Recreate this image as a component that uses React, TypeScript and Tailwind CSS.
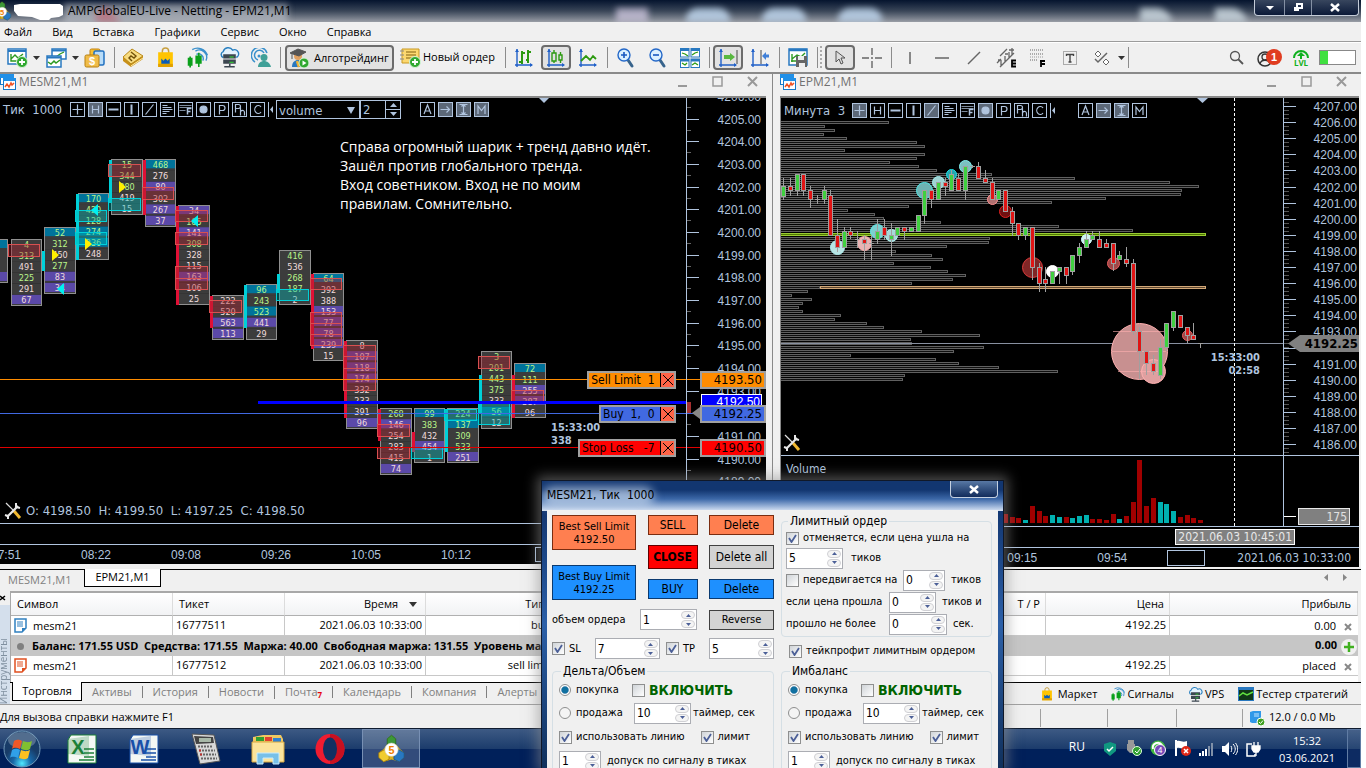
import React from "react";
import type { ReactNode } from "react";

type Cell = [string, string];
type Cluster = {
  x: number;
  y: number;
  w: number;
  h: number;
  rows: Cell[];
  bar?: [string, number, number];
  marks?: [string, number, number][];
};

const RED = "#e01035";
const CYAN = "#00d0d8";
const STEEL = "#b0c4de";

/* Cell codes: first letter is the fill (n, t, p), second the text tone (g, w). */
const clusters: Cluster[] = [
  { x: -24, y: 239, w: 32, h: 44, rows: [["173", "tg"], ["253", "ng"], ["282", "nw"], ["142", "pw"]] },
  { x: 11, y: 239, w: 31, h: 67, rows: [["4", "ng"], ["313", "ng"], ["491", "nw"], ["225", "ng"], ["291", "nw"], ["67", "pw"]], marks: [["r", 244, 256]] },
  { x: 44, y: 227, w: 32, h: 67, rows: [["52", "tg"], ["312", "ng"], ["450", "nw"], ["277", "ng"], ["83", "pw"], ["34", "pw"]], bar: [CYAN, 251, 271] },
  { x: 78, y: 193, w: 31, h: 67, rows: [["170", "tg"], ["420", "ng"], ["128", "ng"], ["274", "tg"], ["236", "tg"], ["248", "nw"]], bar: [CYAN, 194, 260], marks: [["c", 210, 221], ["c", 232, 244]] },
  { x: 111, y: 159, w: 32, h: 56, rows: [["15", "ng"], ["344", "ng"], ["380", "ng"], ["419", "nw"], ["15", "nw"]], bar: [CYAN, 160, 203], marks: [["r", 164, 176], ["c", 198, 210]] },
  { x: 145, y: 159, w: 31, h: 68, rows: [["468", "tg"], ["276", "nw"], ["80", "pw"], ["302", "nw"], ["267", "pw"], ["37", "pw"]], bar: [RED, 160, 215], marks: [["r", 187, 199]] },
  { x: 178, y: 205, w: 32, h: 100, rows: [["34", "pw"], ["185", "ng"], ["141", "pw"], ["308", "ng"], ["328", "nw"], ["115", "nw"], ["163", "pw"], ["106", "nw"], ["25", "nw"]], bar: [RED, 206, 305], marks: [["r", 210, 221], ["r", 232, 244], ["r", 266, 278], ["r", 278, 289]] },
  { x: 212, y: 295, w: 32, h: 45, rows: [["222", "nw"], ["520", "nw"], ["563", "pw"], ["113", "pw"]], bar: [RED, 296, 328], marks: [["r", 300, 312]] },
  { x: 246, y: 284, w: 31, h: 56, rows: [["96", "tg"], ["243", "ng"], ["523", "tg"], ["441", "pw"], ["29", "nw"]], bar: [CYAN, 285, 328] },
  { x: 279, y: 250, w: 32, h: 55, rows: [["416", "ng"], ["536", "nw"], ["268", "ng"], ["187", "ng"], ["2", "nw"]], bar: [CYAN, 274, 293], marks: [["c", 289, 300]] },
  { x: 313, y: 273, w: 31, h: 88, rows: [["64", "tg"], ["392", "nw"], ["388", "nw"], ["153", "pw"], ["77", "pw"], ["78", "pw"], ["239", "pw"], ["15", "nw"]], bar: [RED, 274, 349], marks: [["r", 278, 289], ["r", 312, 323], ["r", 323, 334], ["r", 334, 345]] },
  { x: 346, y: 340, w: 32, h: 89, rows: [["8", "nw"], ["107", "pw"], ["118", "pw"], ["174", "pw"], ["332", "nw"], ["233", "nw"], ["391", "nw"], ["96", "pw"]], bar: [RED, 341, 418], marks: [["r", 345, 356], ["r", 356, 368], ["r", 368, 379], ["r", 379, 390]] },
  { x: 380, y: 408, w: 32, h: 67, rows: [["268", "ng"], ["146", "pw"], ["254", "nw"], ["283", "nw"], ["415", "nw"], ["74", "pw"]], bar: [RED, 409, 441], marks: [["r", 424, 436], ["r", 447, 458]] },
  { x: 414, y: 408, w: 31, h: 55, rows: [["99", "tg"], ["383", "ng"], ["432", "nw"], ["454", "pw"], ["1", "nw"]], bar: [RED, 432, 452], marks: [["c", 447, 458]] },
  { x: 447, y: 408, w: 32, h: 55, rows: [["224", "ng"], ["137", "tg"], ["309", "ng"], ["533", "ng"], ["251", "pw"]], bar: [CYAN, 409, 452], marks: [["c", 409, 420]] },
  { x: 481, y: 351, w: 31, h: 78, rows: [["3", "ng"], ["201", "ng"], ["443", "ng"], ["375", "ng"], ["333", "nw"], ["56", "tg"], ["12", "nw"]], bar: [CYAN, 375, 413], marks: [["r", 356, 368], ["c", 402, 424]] },
  { x: 514, y: 363, w: 32, h: 55, rows: [["72", "tg"], ["111", "ng"], ["255", "pw"], ["387", "pw"], ["96", "nw"]], bar: [RED, 375, 418], marks: [["r", 390, 402]] },
];

const fills: Record<string, string> = { n: "#3c3c3c", t: "#00739b", p: "#5b49a8" };
const tones: Record<string, string> = { g: "#b9f58a", w: "#f0dcdc" };

const profile = [
  889, 825, 835, 824, 847, 917, 925, 845, 925, 917, 890, 919, 937, 992, 1075, 1170, 1199, 1182, 1181, 1106, 1052, 909, 848, 875, 884, 941, 1059,
  1133, 1206, 990, 989, 947, 896, 932, 943, 894, 931, 948, 966, 953, 912, 820, 808, 792, 812, 803, 799, 803, 841, 835, 867, 884, 922, 980, 911,
  912, 984, 954, 851, 936, 959, 999, 1058, 905, 903,
];

/* x, wick top, wick bottom, body top, body bottom, direction */
const candles: [number, number, number, number, number, string][] = [
  [783, 178, 200, 186, 196, "u"], [790, 178, 196, 186, 190, "d"], [797, 174, 196, 174, 190, "u"], [803, 174, 196, 174, 190, "d"],
  [810, 186, 208, 190, 199, "d"], [817, 195, 204, 199, 199, "x"], [824, 186, 204, 190, 199, "u"], [830, 190, 235, 195, 235, "d"],
  [837, 219, 252, 235, 247, "d"], [844, 227, 248, 231, 247, "u"], [850, 227, 239, 231, 235, "d"], [857, 231, 248, 239, 239, "x"],
  [864, 235, 260, 239, 243, "d"], [871, 235, 260, 243, 243, "x"], [877, 219, 244, 231, 239, "u"], [884, 219, 240, 227, 235, "d"],
  [891, 223, 256, 235, 239, "u"], [897, 227, 235, 227, 235, "u"], [904, 227, 240, 227, 231, "d"], [911, 227, 231, 227, 231, "u"],
  [918, 215, 231, 215, 231, "u"], [924, 190, 224, 190, 215, "u"], [931, 190, 208, 190, 199, "d"], [938, 182, 199, 182, 199, "u"],
  [945, 178, 196, 182, 186, "d"], [951, 170, 190, 174, 190, "u"], [958, 174, 190, 178, 190, "d"], [965, 166, 200, 166, 190, "u"],
  [972, 165, 168, 166, 166, "x"], [978, 162, 178, 166, 178, "d"], [985, 170, 182, 178, 182, "d"], [992, 178, 199, 182, 199, "d"],
  [998, 190, 199, 190, 199, "u"], [1005, 190, 211, 190, 211, "d"], [1012, 207, 236, 211, 223, "d"], [1018, 223, 240, 223, 235, "d"],
  [1025, 227, 240, 227, 235, "u"], [1032, 227, 280, 227, 267, "d"], [1039, 263, 292, 267, 283, "d"], [1045, 267, 292, 279, 283, "d"],
  [1052, 271, 283, 271, 283, "u"], [1059, 267, 284, 267, 271, "u"], [1066, 267, 284, 267, 275, "d"], [1072, 255, 275, 255, 271, "u"],
  [1079, 243, 263, 247, 255, "u"], [1086, 231, 247, 239, 247, "u"], [1092, 231, 239, 235, 239, "u"], [1099, 231, 247, 239, 247, "d"],
  [1106, 239, 247, 243, 247, "d"], [1113, 243, 271, 243, 263, "d"], [1119, 251, 259, 255, 259, "u"], [1126, 247, 267, 259, 263, "d"],
  [1133, 259, 335, 263, 331, "d"], [1139, 327, 379, 331, 351, "d"], [1146, 351, 375, 351, 363, "d"], [1153, 355, 375, 363, 371, "d"],
  [1160, 339, 379, 347, 375, "u"], [1166, 323, 351, 323, 347, "u"], [1173, 311, 331, 311, 327, "u"], [1180, 315, 327, 315, 327, "d"],
  [1187, 327, 343, 327, 335, "d"], [1193, 323, 339, 335, 339, "d"], [1200, 343, 348, 343, 343, "x"],
];

/* x, y, radius, fill, stroke */
const bubbles: [number, number, number, string, string][] = [
  [837, 247, 7, "#b8e4e4", "#b0f4f4"], [864, 243, 7, "#e8b4b4", "#ffb0b0"], [877, 231, 7, "#7cd0d0", "#60f0f0"], [891, 235, 6, "#a8d8d8", "#b0f4f4"],
  [924, 190, 8, "#6fb4b4", "#50e8e8"], [938, 182, 6, "#a0d4d4", "#a0f0f0"], [951, 174, 5, "#20a8b0", "#20e0e8"], [965, 166, 6, "#7cc0c0", "#80f0f0"],
  [992, 199, 5, "#b07070", "#ff9090"], [1005, 211, 6, "#701010", "#e02020"], [1032, 267, 10, "#802626", "#e03c3c"], [1052, 271, 6, "#ffffff", "#ffffff"],
  [1086, 239, 5, "#d0f0f0", "#d0ffff"], [1113, 263, 6, "#a04848", "#e86060"], [1139, 351, 28, "#c89090", "#ffb0b0"], [1153, 371, 12, "#e0a0a0", "#ffb0b0"],
  [1187, 335, 5, "#a04848", "#e86060"],
];

const volumes: [number, number, string][] = [
  [1005, 9, "r"], [1012, 6, "r"], [1018, 5, "r"], [1025, 3, "c"], [1032, 17, "r"], [1039, 12, "r"], [1045, 7, "r"], [1052, 8, "c"], [1059, 6, "c"],
  [1066, 6, "r"], [1072, 5, "c"], [1079, 7, "c"], [1086, 8, "c"], [1092, 4, "r"], [1099, 4, "r"], [1106, 3, "r"], [1113, 9, "r"], [1119, 4, "c"],
  [1126, 7, "r"], [1133, 21, "r"], [1139, 63, "r"], [1146, 17, "r"], [1153, 25, "r"], [1160, 21, "c"], [1166, 19, "c"], [1173, 12, "c"],
  [1180, 6, "r"], [1187, 8, "r"], [1193, 5, "r"], [1200, 3, "r"],
];

const tahoma = "font-['DejaVu_Sans_Condensed','DejaVu_Sans',sans-serif]";

/* ---------- shared icons ---------- */

function Bag({ size = 20 }: { size?: number }) {
  return (
    <svg width={size} height={size} viewBox="0 0 20 20">
      <path d="M7 6V4a3 3 0 0 1 6 0v2" fill="none" stroke="#c8a040" strokeWidth="1.4" />
      <path d="M3 5h14v14H3z" fill="#ffc400" />
      <path d="M3 16h14v3H3z" fill="#e0a000" />
      <path d="M6 16v-5l2 2 2-2 2 2 2-2v5z" fill="#0a5cb8" />
    </svg>
  );
}

function Signal({ size = 20 }: { size?: number }) {
  return (
    <svg width={size} height={size} viewBox="0 0 20 20">
      <path d="M8 4a7 7 0 0 1 10 9M9 7a4.500 4.500 0 0 1 6 6M5 2.500A10 10 0 0 1 19.500 8" fill="none" stroke="#3a90cc" strokeWidth="1.300" />
      <path d="M8 8h6v8H8zM10.500 5.500H12V19h-1.500z" fill="#0aa01a" />
      <path d="M1.500 11h3v6h-3zM3 9v10.500" fill="none" stroke="#0aa01a" strokeWidth="1.600" />
    </svg>
  );
}

function Cloud({ size = 20 }: { size?: number }) {
  return (
    <svg width={size} height={size} viewBox="0 0 20 20">
      <path d="M4 10a3 3 0 0 1 0-5.600A5 5 0 0 1 13 3a3.500 3.500 0 0 1 3.500 7" fill="#e4f2fc" stroke="#2a80c0" strokeWidth="1.400" />
      <path d="M4 7h12v4H4zM4 12h12v4H4z" fill="#3c4650" />
      <path d="M10 9h4v1h-4zM10 14h4v1h-4z" fill="#30e030" />
      <path d="M9.500 16h1.500v2H9.500zM5 18h10v1.500H5z" fill="#3c4650" />
    </svg>
  );
}

function Plus({ x = 14, y = 14 }: { x?: number; y?: number }) {
  return (
    <g>
      <circle cx={x} cy={y} r="5.500" fill="#2fa82f" stroke="#d8f4d8" />
      <path d={`M${x - 3} ${y}h6M${x} ${y - 3}v6`} stroke="#fff" strokeWidth="1.800" />
    </g>
  );
}

function Axes({ children }: { children?: ReactNode }) {
  return (
    <svg width="20" height="20" viewBox="0 0 20 20">
      <path d="M3 1v18M1 17h17" stroke="#2060c8" strokeWidth="1.400" />
      <path d="M1 4l2-3 2 3zM16 15l3 2-3 2z" fill="#2060c8" />
      {children}
    </svg>
  );
}

function Trident({ size = 24 }: { size?: number }) {
  return (
    <svg width={size} height={size} viewBox="0 0 24 24">
      <path d="M8.500 4L12 1l3.500 3v4l3 4 4 3.500v4l-4 3.500-6.500-2L5.500 23l-4-3.500v-4L6 12l2.500-4z" fill="#d8b020" />
      <path d="M8.500 4L12 1l3.500 3v5L12 11 8.500 9z" fill="#3c9838" stroke="#1c6020" strokeWidth="0.600" />
      <path d="M1.500 15.500L6 13l4 3v5l-4.500 2-4-3.500z" fill="#f0cc30" stroke="#987008" strokeWidth="0.600" />
      <path d="M22.500 15.500L18 13l-4 3v5l4.500 2 4-3.500z" fill="#2878c0" stroke="#104880" strokeWidth="0.600" />
      <circle cx="12" cy="13" r="5.500" fill="#fff" stroke="#d0d0c0" strokeWidth="0.500" />
      <text x="12" y="16.500" textAnchor="middle" fontSize="9" fontWeight="bold" fill="#f08000" fontFamily="Liberation Sans">5</text>
    </svg>
  );
}

function ChartWindowIcon() {
  return (
    <svg width="17" height="17" viewBox="0 0 17 17">
      <rect x="0.500" y="0.500" width="13" height="10" fill="#fff" stroke="#1878c8" />
      <path d="M0 0h14v4H0z" fill="#2090e8" />
      <rect x="3.500" y="4.500" width="12" height="11" fill="#fff" stroke="#1878c8" />
      <path d="M3 4h13v3H3z" fill="#2090e8" />
      <path d="M5 13l2-3 2 3 2-4 1 2 2-2" fill="none" stroke="#f05020" strokeWidth="1.500" />
    </svg>
  );
}

/* ---------- title, menu and toolbar ---------- */

function TitleBar() {
  return (
    <header className="relative flex h-[22px] shrink-0 items-center overflow-hidden bg-linear-to-b from-[#06142e] via-[#3a4658] to-[#9a9ea6] text-[13px] text-black">
      <div className="absolute inset-0 overflow-hidden blur-[3px]">
        <div className="absolute top-1 left-16 h-5 w-56 bg-[#c8ccd2]/60" />
        <div className="absolute top-3 left-24 h-4 w-6 rotate-45 bg-[#d05060]/50" />
        <div className="absolute top-2 left-[616px] h-6 w-8 bg-[#d8d0e8]/70" />
        <div className="absolute top-2 left-[686px] h-6 w-11 rounded-full bg-[#c4dcf4]/80" />
        <div className="absolute top-2 left-[762px] h-6 w-11 rounded-full bg-[#c4dcf4]/80" />
        <div className="absolute top-2 left-[838px] h-6 w-11 rounded-full bg-[#c4dcf4]/80" />
        <div className="absolute top-2 left-[1140px] h-6 w-8 rounded-tr-2xl bg-[#d0dce4]/80" />
        <div className="absolute top-2 left-[1215px] h-6 w-8 rounded-tr-2xl bg-[#d0dce4]/80" />
      </div>
      <div className="relative -ml-2 flex items-center">
        <Trident size={20} />
        <svg width="50" height="18" viewBox="0 0 50 18" className="ml-0.5">
          <path d="M0 3l6-1h40l3 2v9l-4 2-8 1-2 2H26l-8-3-14-1-4-5z" fill="#fff" />
        </svg>
      </div>
      <h1 className="relative pl-1 font-['Open_Sans','Noto_Sans',sans-serif] text-[12px]">AMPGlobalEU-Live - Netting - EPM21,M1</h1>
      <div className="relative mr-0.5 ml-auto flex h-4 self-start overflow-hidden rounded-b border border-t-0 border-[#c4ccd8] bg-linear-to-b from-[#38465e] to-[#0c1a38]">
        <button aria-label="Свернуть" className="flex w-[30px] items-center justify-center border-r border-[#8490a4]">
          <svg width="10" height="6" viewBox="0 0 10 6"><path d="M1 1h8L5 5z" fill="#fff" /></svg>
        </button>
        <button aria-label="Восстановить" className="flex w-[27px] items-center justify-center border-r border-[#8490a4]">
          <svg width="10" height="9" viewBox="0 0 10 9"><path d="M4 1h5v4H4z" fill="none" stroke="#fff" strokeWidth="2" /><path d="M1 4h5v4H1z" fill="#fff" /></svg>
        </button>
        <button aria-label="Закрыть" className="flex w-[46px] items-center justify-center">
          <svg width="10" height="9" viewBox="0 0 10 9"><path d="M1 1l8 7M9 1L1 8" stroke="#fff" strokeWidth="2.500" /></svg>
        </button>
      </div>
    </header>
  );
}

function MenuBar() {
  return (
    <nav className="flex h-5 shrink-0 items-center gap-5 border-b border-[#9c9c9c] bg-[#f0f0f0] pl-1 text-[11px]">
      {["Файл", "Вид", "Вставка", "Графики", "Сервис", "Окно", "Справка"].map((m) => (
        <a key={m} href="#" className="leading-4">{m}</a>
      ))}
    </nav>
  );
}

function Tool({ label, active, children }: { label: string; active?: boolean; children: ReactNode }) {
  return (
    <div className="flex h-full w-8 shrink-0 items-center justify-center">
      <button
        aria-label={label}
        className={active ? "flex h-[25px] w-[30px] items-center justify-center rounded border-2 border-[#6c6c6c] bg-[#e2e2e2]" : "flex h-[25px] w-[30px] items-center justify-center"}
      >
        {children}
      </button>
    </div>
  );
}

function Sep() {
  return (
    <div className="flex w-1.5 shrink-0 justify-center py-1">
      <div className="w-px bg-[#8c8c8c]" />
    </div>
  );
}

function Caret() {
  return (
    <svg width="7" height="5" viewBox="0 0 7 5" className="shrink-0 self-center"><path d="M0 1h7L3.500 5z" fill="#333" /></svg>
  );
}

function Toolbar() {
  return (
    <div className="mt-px flex h-[31px] shrink-0 border-b-2 border-[#8a8a8a] bg-[#f0f0f0] pl-px text-[11px]">
      <Tool label="Новый график">
        <svg width="21" height="20" viewBox="0 0 21 20">
          <rect x="1" y="1" width="18" height="15" fill="#fff" stroke="#2878c0" strokeWidth="1.500" />
          <path d="M1 3h18" stroke="#2878c0" strokeWidth="2" />
          <path d="M4 6v7h12M4 11l4-4 3 3 5-4" fill="none" stroke="#2c9a20" strokeWidth="1.400" />
          <Plus x={15} y={14} />
        </svg>
      </Tool>
      <Caret />
      <Tool label="Профили">
        <svg width="21" height="20" viewBox="0 0 21 20">
          <rect x="6" y="1" width="14" height="10" fill="#fff" stroke="#2878c0" strokeWidth="1.500" />
          <path d="M6 2.500h14" stroke="#2878c0" strokeWidth="2" />
          <path d="M10 9l4-3 4-2" fill="none" stroke="#2c9a20" strokeWidth="1.300" />
          <rect x="1" y="8" width="14" height="11" fill="#fff" stroke="#2878c0" strokeWidth="1.500" />
          <path d="M1 9.500h14" stroke="#2878c0" strokeWidth="2" />
          <path d="M2 14l3 2 3-3 2 2 4-3" fill="none" stroke="#2c9a20" strokeWidth="1.500" />
        </svg>
      </Tool>
      <Caret />
      <Tool label="Символы">
        <svg width="22" height="20" viewBox="0 0 22 20">
          <rect x="6" y="1" width="10" height="12" rx="1.500" fill="#f8c030" stroke="#c08010" />
          <rect x="10" y="3" width="10" height="14" rx="1.500" fill="#b8dcf8" stroke="#2070c0" strokeWidth="1.500" />
          <rect x="1" y="7" width="14" height="12" rx="1.500" fill="#f0bc48" stroke="#b88010" />
          <text x="8" y="17" textAnchor="middle" fontSize="11" fontWeight="bold" fill="#fff" fontFamily="Liberation Sans">$</text>
        </svg>
      </Tool>
      <Sep />
      <Tool label="Депозит">
        <svg width="21" height="20" viewBox="0 0 21 20">
          <path d="M0 9v4l8 6 12-8V8z" fill="#c89018" />
          <path d="M0 9l9-8 11 7-12 8z" fill="#f8dc80" stroke="#b88818" />
          <path d="M8 4l5 4-2 2-3-2-2 2 3 3" fill="none" stroke="#705008" strokeWidth="1.400" />
          <path d="M8 18l12-8" stroke="#fff0b0" />
        </svg>
      </Tool>
      <Tool label="Маркет"><Bag size={21} /></Tool>
      <Tool label="Сигналы"><Signal size={21} /></Tool>
      <Tool label="VPS"><Cloud size={21} /></Tool>
      <Tool label="Сообщество">
        <svg width="21" height="20" viewBox="0 0 21 20">
          <path d="M4 14a8 8 0 1 1 12-9M7 12a5 5 0 1 1 6-7" fill="none" stroke="#3a90cc" strokeWidth="1.500" />
          <circle cx="8" cy="8" r="1.500" fill="#3a90cc" />
          <circle cx="13" cy="9.500" r="3.500" fill="#40a098" />
          <path d="M7 19c0-4 3-6 6-6s6 2 7 6z" fill="#40a098" />
        </svg>
      </Tool>
      <Sep />
      <button className="my-[2px] ml-0.5 flex h-[26px] w-[109px] shrink-0 items-center gap-1 rounded border-2 border-[#6c6c6c] bg-[#e2e2e2] pl-0.5">
        <svg width="21" height="20" viewBox="0 0 21 20" className="shrink-0">
          <path d="M3 19c0-5 3-7 6-7s6 2 7 7z" fill="#2878c0" />
          <path d="M8 13l2 6" stroke="#f0b030" strokeWidth="2.500" />
          <circle cx="9" cy="8" r="4" fill="#e0a060" />
          <path d="M1 5l8-4 8 3-7 4zM3 6v5" fill="#555" stroke="#555" />
          <circle cx="15" cy="15" r="5" fill="#2fa82f" stroke="#d8f4d8" />
          <path d="M13.500 12.500v5l4-2.500z" fill="#fff" />
        </svg>
        Алготрейдинг
      </button>
      <button className="ml-1.5 flex w-[102px] shrink-0 items-center gap-0.5 whitespace-nowrap">
        <svg width="21" height="20" viewBox="0 0 21 20" className="shrink-0">
          <path d="M2 1h17v14H2z" fill="#fcd870" stroke="#c89820" />
          <path d="M0 3h4M0 7h4M0 11h4" stroke="#888" />
          <path d="M6 4h10M6 7h10M6 10h6" stroke="#806010" />
          <Plus x={15} y={14} />
        </svg>
        Новый ордер
      </button>
      <Sep />
      <Tool label="Бары"><Axes><path d="M8 3v13M5 14h3M8 5h3M14 2v13M12 12h2M14 4h3" stroke="#2c9a10" strokeWidth="2" fill="none" /></Axes></Tool>
      <Tool label="Свечи" active><Axes><path d="M6 5h4v8H6zM8 2v3M8 13v2M13 7h3v5h-3zM14.500 4v3M14.500 12v3" stroke="#2c9a10" strokeWidth="1.400" fill="none" /></Axes></Tool>
      <Tool label="Линия"><Axes><path d="M3 13l5-5 4 4 3-4 3 3" stroke="#2c9a10" strokeWidth="1.800" fill="none" /></Axes></Tool>
      <Sep />
      <Tool label="Увеличить">
        <svg width="20" height="22" viewBox="0 0 20 22"><path d="M12 13l4 6" stroke="#38648c" strokeWidth="3" strokeLinecap="round" /><circle cx="8" cy="8" r="6" fill="#dcf0ff" stroke="#2468c8" strokeWidth="1.400" /><path d="M5 8h6M8 5v6" stroke="#1858c0" strokeWidth="1.600" /></svg>
      </Tool>
      <Tool label="Уменьшить">
        <svg width="20" height="22" viewBox="0 0 20 22"><path d="M12 13l4 6" stroke="#38648c" strokeWidth="3" strokeLinecap="round" /><circle cx="8" cy="8" r="6" fill="#dcf0ff" stroke="#2468c8" strokeWidth="1.400" /><path d="M5 8h6" stroke="#1858c0" strokeWidth="1.600" /></svg>
      </Tool>
      <Tool label="Плитка">
        <svg width="20" height="20" viewBox="0 0 20 20">
          <path d="M0 0h9.500v9.500H0zM10.500 0H20v9.500h-9.500zM0 10.500h9.500V20H0zM10.500 10.500H20V20h-9.500z" fill="#2878c0" />
          <path d="M1 3h7.500v5.500H1zM11.500 3H19v5.500h-7.500zM1 13.500h7.500V19H1zM11.500 13.500H19V19h-7.500z" fill="#fff" />
          <path d="M2 5l3 1 3 2M12 7l3-2 3-1M2 15l3 2 2-2M12 17l3-2 3 2" stroke="#2c9a10" strokeWidth="1.300" fill="none" />
        </svg>
      </Tool>
      <Sep />
      <Tool label="Автопрокрутка" active><Axes><path d="M19 2v14" stroke="#444" /><path d="M6 7h6V5l5 4-5 4v-2H6z" fill="#58b840" /></Axes></Tool>
      <Tool label="Сдвиг"><Axes><path d="M11 2v14" stroke="#444" /><path d="M19 6.500h-3V4l-4 4 4 4V9.500h3z" fill="#4080d8" /></Axes></Tool>
      <Sep />
      <Tool label="Шаблоны">
        <svg width="20" height="20" viewBox="0 0 20 20">
          <rect x="1" y="1" width="18" height="16" fill="#fff" stroke="#2878c0" strokeWidth="1.500" />
          <path d="M1 2h18" stroke="#2878c0" strokeWidth="2.500" />
          <path d="M4 6v8M3 13h5M4 11l5-4 4 2 4-4" stroke="#2c9a20" strokeWidth="1.400" fill="none" />
          <path d="M8 8h11v11H8z" fill="#666" /><path d="M10 8h6v4h-6zM11 15h6v4h-6z" fill="#eee" />
        </svg>
      </Tool>
      <Sep />
      <svg width="4" height="24" viewBox="0 0 4 24" className="shrink-0 self-center"><path d="M1 0v24" stroke="#aaa" strokeWidth="2" strokeDasharray="2 2" /></svg>
      <Tool label="Курсор" active>
        <svg width="12" height="15" viewBox="0 0 12 15"><path d="M2 1v11l3-3 2 5 2-1-2-5h4z" fill="#ddd" stroke="#555" /></svg>
      </Tool>
      <Tool label="Перекрестие">
        <svg width="20" height="20" viewBox="0 0 20 20"><path d="M0 10h7M13 10h7M10 0v7M10 13v7M9 10h2" stroke="#666" strokeWidth="1.400" /></svg>
      </Tool>
      <Sep />
      <Tool label="Вертикальная линия"><svg width="20" height="20" viewBox="0 0 20 20"><path d="M10 4v12" stroke="#666" strokeWidth="1.500" /></svg></Tool>
      <Tool label="Горизонтальная линия"><svg width="20" height="20" viewBox="0 0 20 20"><path d="M3 10h14" stroke="#666" strokeWidth="1.500" /></svg></Tool>
      <Tool label="Трендовая линия"><svg width="20" height="20" viewBox="0 0 20 20"><path d="M4 16L16 4" stroke="#666" strokeWidth="1.500" /></svg></Tool>
      <Tool label="Каналы">
        <svg width="21" height="21" viewBox="0 0 21 21"><path d="M1 16l4-4M4 20L18 6M4 9l7-7M5 13v6M9 9v6M13 5v6M16 1v7M2 13h3M9 7h3M13 3h5" stroke="#666" strokeWidth="1.300" /><path d="M20 13.500h-4v6h4M16 16.500h4" stroke="#000" strokeWidth="1.800" fill="none" /></svg>
      </Tool>
      <Tool label="Фибоначчи">
        <svg width="18" height="20" viewBox="0 0 18 20"><path d="M1 2h14M1 6h14M1 12h8" stroke="#666" strokeDasharray="1 1" strokeWidth="1.200" /><path d="M1 9h14" stroke="#999" strokeDasharray="1 1" /><path d="M11 13h5M12 13v6M12 16h4" stroke="#000" strokeWidth="1.800" /></svg>
      </Tool>
      <Tool label="Текст">
        <svg width="18" height="18" viewBox="0 0 18 18"><rect x="2.500" y="2.500" width="13" height="13" fill="none" stroke="#666" strokeDasharray="1 1" /><path d="M5.500 7V5.500h7V7M9 5v8M7.500 13h3" stroke="#444" strokeWidth="1.400" fill="none" /></svg>
      </Tool>
      <Tool label="Фигуры">
        <svg width="18" height="18" viewBox="0 0 18 18"><path d="M5 2l3 3-3 3-3-3zM13 10l3 3-3 3-3-3z" fill="#fff" stroke="#666" /><path d="M2 10l3 3 9-9" stroke="#666" fill="none" strokeWidth="1.500" /></svg>
      </Tool>
      <Caret />
      <Sep />
      <div className="mr-[5px] ml-auto flex items-center">
        <button aria-label="Поиск"><svg width="15" height="15" viewBox="0 0 15 15"><circle cx="6" cy="6" r="4.500" fill="none" stroke="#555" strokeWidth="1.300" /><path d="M9 9l5 5" stroke="#555" strokeWidth="1.800" /></svg></button>
        <button aria-label="Уведомления" className="ml-3">
          <svg width="27" height="20" viewBox="0 0 27 20">
            <circle cx="9" cy="11" r="7" fill="none" stroke="#333" strokeWidth="1.500" />
            <circle cx="9" cy="9" r="3" fill="none" stroke="#333" strokeWidth="1.300" />
            <path d="M4 16c1-5 9-5 10 0" fill="none" stroke="#333" strokeWidth="1.300" />
            <circle cx="18" cy="9" r="8" fill="#e03c20" />
            <text x="18" y="13" textAnchor="middle" fontSize="11" fontWeight="bold" fill="#fff" fontFamily="Liberation Sans">1</text>
          </svg>
        </button>
        <div className="ml-2 flex w-5 flex-col items-center">
          <svg width="18" height="11" viewBox="0 0 18 11"><path d="M2 10a7 7 0 1 1 14 0" fill="none" stroke="#10b020" strokeWidth="2" /><path d="M9 4l4 4H5zM8 7h2v4H8z" fill="#10b020" /></svg>
          <span className="text-[8px] leading-[8px] font-bold text-[#10b020]">LVL</span>
        </div>
        <div className="ml-2 h-[15px] w-[37px] border border-[#888] bg-white"><div className="h-full w-2 bg-[#40e040]" /></div>
      </div>
    </div>
  );
}

/* ---------- charts ---------- */

const glyphs: Record<string, ReactNode> = {
  plus: <path d="M7 2v10M2 7h10" />,
  h: <path d="M4 3v8M10 3v8M4 7h6" />,
  minus: <path d="M2 7h10" strokeWidth="2" />,
  bar: <path d="M7 2v10" strokeWidth="2" />,
  slash: <path d="M3 12L11 2" />,
  rows: <path d="M2 3h5M2 5h9M2 7h10M2 9h7M2 11h4" />,
  fib: <g><path d="M1 3h12M1 5h12M1 8h6" opacity="0.700" /><path d="M9 12V6h4M9 9h3" strokeWidth="1.500" /></g>,
  dot: <circle cx="7" cy="7" r="3.500" fill={STEEL} />,
  p: <path d="M5 12V3h3a2.500 2.500 0 0 1 0 5H5" />,
  ph: <path d="M3 10V2h3a2 2 0 0 1 0 4H3M8 5v8M8 9c2-2 4-1 4 1v3" />,
  c: <path d="M10.500 4.500a3.500 4 0 1 0 0 5" />,
  a: <path d="M3.500 11.500L7 2.500l3.500 9M5 8.500h4" />,
  arrow: <path d="M2 7h9M8 4l3 3-3 3" />,
  ibeam: <path d="M3 2h8M3 12h8M7 2v10M5 4l2-2 2 2M5 10l2 2 2-2" />,
  m: <path d="M3.500 11.500v-8L7 8l3.500-4.500v8" />,
};

function Glyph({ name, on }: { name: string; on: boolean }) {
  return (
    <button aria-label={name} className={on ? "h-[15px] w-[15px] border border-[#b0c4de] bg-[#5c6878]" : "h-[15px] w-[15px] border border-[#b0c4de] bg-black"}>
      <svg width="13" height="13" viewBox="0.500 0.500 13 13" fill="none" stroke={STEEL} strokeWidth="1.200">{glyphs[name]}</svg>
    </button>
  );
}

const drawTools = ["plus", "h", "minus", "bar", "slash", "rows", "fib", "dot", "p", "ph", "c"];
const viewTools = ["a", "arrow", "ibeam", "m"];

function Collapse() {
  return <svg width="5" height="15" viewBox="0 0 5 15"><path d="M0.500 0v15" stroke={STEEL} /><path d="M5 4v7L2 7.500z" fill={STEEL} /></svg>;
}

function PriceTag({ y, tone, children }: { y: string; tone: string; children: ReactNode }) {
  return (
    <div className={`absolute left-[13px] ${y} h-[18px] w-[66px] border-2 border-[#a0a0a0] ${tone} pr-0.5 text-right text-[13px] leading-[14px] text-black`}>{children}</div>
  );
}

function OrderTag({ y, tone, children }: { y: string; tone: string; children: ReactNode }) {
  return (
    <div className={`absolute right-[10px] ${y} flex h-[18px] border-2 border-[#a0a0a0] ${tone} text-[12px] leading-[14px] text-black`}>
      <span className="px-0.5 whitespace-pre">{children}</span>
      <button aria-label="Закрыть ордер" className="flex w-3.5 items-center justify-center border-l border-black bg-[#ff6347]">
        <svg width="10" height="10" viewBox="0 0 10 10"><path d="M0 0l10 10M10 0L0 10" stroke="#000" /></svg>
      </button>
    </div>
  );
}

function Wrench() {
  return (
    <svg width="18" height="18" viewBox="0 0 18 18">
      <path d="M2 1l9 9" stroke="#ddd" strokeWidth="1.200" />
      <path d="M10 9l6 7" stroke="#f0b830" strokeWidth="3" />
      <path d="M3 15L14 4" stroke="#e8e8e8" strokeWidth="2.200" />
      <path d="M12 1v4l4 1M1 13l3 1v3" stroke="#e8e8e8" strokeWidth="2" fill="none" />
    </svg>
  );
}

function Arrow({ x, y, left }: { x: number; y: number; left?: boolean }) {
  return left ? <path d={`M${x + 7} ${y - 6}v12l-7-6z`} fill="#00f0f0" /> : <path d={`M${x} ${y - 6}v12l7-6z`} fill="#fff000" />;
}

function MdiFrame({ title, className, children }: { title: string; className: string; children: ReactNode }) {
  return (
    <section className={className}>
      <div className="flex h-[22px] shrink-0 items-center gap-1 text-[12px] text-[#707070]">
        <div className="flex items-center gap-0.5 pb-1.5"><ChartWindowIcon /><h2>{title}</h2></div>
        <div className="mr-[14px] ml-auto flex gap-6 pb-2">
          <button aria-label="Свернуть окно"><svg width="11" height="11" viewBox="0 0 11 11"><path d="M1 10h9" stroke="#999" strokeWidth="2" /></svg></button>
          <button aria-label="Развернуть окно"><svg width="11" height="11" viewBox="0 0 11 11"><path d="M1 1h9v9H1z" fill="none" stroke="#999" strokeWidth="1.500" /></svg></button>
          <button aria-label="Закрыть окно"><svg width="11" height="11" viewBox="0 0 11 11"><path d="M1 1l9 9M10 1l-9 9" stroke="#999" strokeWidth="2" /></svg></button>
        </div>
      </div>
      {children}
    </section>
  );
}

function ClusterChart() {
  return (
    <div className={`mr-[6px] mb-[5px] flex min-h-0 flex-1 flex-col overflow-hidden border-t-2 border-[#888] bg-black text-[#b0c4de] ${tahoma}`}>
      <div className="flex min-h-0 flex-1 border-b border-[#b0c4de]">
        <div className="relative flex min-w-0 flex-1 flex-col justify-between border-r border-[#b0c4de]">
          <svg className="absolute inset-0 h-full w-full">
            <g transform="translate(0,-98)">
              {clusters.map((c) => {
                const rh = c.h / c.rows.length;
                return (
                  <g key={c.x}>
                    {c.rows.map(([, k], i) => (
                      <g key={i}>
                        <rect x={c.x} y={c.y + i * rh} width={c.w} height={rh} fill="#3c3c3c" />
                        <rect x={c.x} y={c.y + i * rh} width={c.w} height={rh - 2} fill={fills[k[0]]} />
                      </g>
                    ))}
                    <rect x={c.x + 0.5} y={c.y + 0.5} width={c.w - 1} height={c.h - 1} fill="none" stroke="#909090" />
                    {c.rows.map(([v, k], i) => (
                      <text key={i} x={c.x + c.w / 2} y={Math.round(c.y + i * rh + rh / 2 + 3)} textAnchor="middle" fontSize="9" fill={tones[k[1]]}>{v}</text>
                    ))}
                    {c.bar && <rect x={c.x - 2} y={c.bar[1]} width="3" height={c.bar[2] - c.bar[1]} fill={c.bar[0]} />}
                    {c.marks?.map(([k, a, b], i) => (
                      <rect key={i} x={c.x - 2.5} y={a + 0.5} width={c.w} height={b - a} fill={k === "r" ? "#b02030" : "#00b8b8"} fillOpacity="0.400" stroke={k === "r" ? "#d85050" : CYAN} />
                    ))}
                  </g>
                );
              })}
              <Arrow x={52} y={255} />
              <Arrow x={85} y={244} />
              <Arrow x={119} y={187} />
              <Arrow x={57} y={289} left />
              <Arrow x={91} y={210} left />
              <Arrow x={191} y={221} left />
              <path d="M0 379.500h700" stroke="#ff8c00" />
              <path d="M0 413.500h700" stroke="#4169e1" />
              <path d="M0 447.500h700" stroke="#e00000" />
              <path d="M258 402.500h440" stroke="#0000ff" strokeWidth="3" />
              <path d="M539 98h10l-5 5z" fill={STEEL} />
              <g fontSize="11" fontWeight="bold" fill={STEEL}>
                <text x="551" y="431">15:33:00</text>
                <text x="551" y="444">338</text>
              </g>
              <g fontSize="14" fill="#fff" fontFamily="Open Sans, Noto Sans, sans-serif">
                <text x="340" y="152">Справа огромный шарик + тренд давно идёт.</text>
                <text x="340" y="171">Зашёл против глобального тренда.</text>
                <text x="340" y="190">Вход советником. Вход не по моим</text>
                <text x="340" y="209">правилам. Сомнительно.</text>
              </g>
            </g>
          </svg>
          <div className="relative flex items-center gap-[3px] pt-0.5 pl-[3px] text-[13px]">
            <span className="w-16 whitespace-pre">Тик  1000</span>
            {drawTools.map((n) => <Glyph key={n} name={n} on={n === "h"} />)}
            <Collapse />
            <select aria-label="Параметр" defaultValue="volume" className="h-[19px] w-[84px] appearance-none border border-[#b0c4de] bg-black pl-0.5 text-[13px]">
              <option value="volume">volume</option>
            </select>
            <svg width="8" height="8" viewBox="0 0 8 8" className="pointer-events-none -ml-4"><path d="M0 1h8L4 8z" fill={STEEL} /></svg>
            <div className="ml-0.5 flex h-[19px] w-[41px] border border-[#b0c4de]">
              <input aria-label="Фильтр" defaultValue="2" className="w-6 bg-black pl-0.5 text-[13px] text-[#b0c4de]" />
              <div className="flex flex-1 flex-col border-l border-[#b0c4de]">
                <button aria-label="Больше" className="flex flex-1 items-center justify-center border-b border-[#b0c4de]"><svg width="7" height="4" viewBox="0 0 7 4"><path d="M0 4h7L3.500 0z" fill={STEEL} /></svg></button>
                <button aria-label="Меньше" className="flex flex-1 items-center justify-center"><svg width="7" height="4" viewBox="0 0 7 4"><path d="M0 0h7L3.500 4z" fill={STEEL} /></svg></button>
              </div>
            </div>
            <div className="ml-4 flex gap-[3px]">{viewTools.map((n) => <Glyph key={n} name={n} on={n !== "a"} />)}</div>
          </div>
          <div className="relative flex items-center gap-1 pb-0.5 pl-1 text-[13px] leading-5">
            <Wrench />
            <span className="whitespace-pre">O: 4198.50  H: 4199.50  L: 4197.25  C: 4198.50</span>
          </div>
          <OrderTag y="top-[273px]" tone="bg-[#ff8c00]">{"Sell Limit  1 "}</OrderTag>
          <OrderTag y="top-[307px]" tone="bg-[#4169e1]">{"Buy  1,  0 "}</OrderTag>
          <OrderTag y="top-[341px]" tone="bg-[#ff0000]">{"Stop Loss   -7 "}</OrderTag>
        </div>
        <div className="relative w-[79px] shrink-0">
          <svg className="absolute inset-0 h-full w-full">
            <g transform="translate(0,-98)">
              {Array.from({ length: 19 }, (_, i) => {
                const y = Math.round(96 + i * 22.67);
                return (
                  <g key={i}>
                    <path d={`M0 ${y + 0.5}h12`} stroke={STEEL} />
                    <path d={`M0 ${y + 11.5}h4`} stroke="#666" />
                    {i !== 14 && (
                      <text x="74" y={y + 5} textAnchor="end" fontSize="12" fill={STEEL} fontFamily="Liberation Sans">{(4206 - i).toFixed(2)}</text>
                    )}
                  </g>
                );
              })}
              <path d="M0 379.500h14" stroke="#ff8c00" />
              <path d="M0 413.500h14" stroke="#4169e1" />
              <path d="M0 447.500h14" stroke="#e00000" />
              <rect x="0" y="402" width="4" height="11" fill="#a83030" />
              <path d="M5 413l8-6v12z" fill="#888" />
            </g>
          </svg>
          <div className="absolute top-[296px] left-[14px] h-4 w-[61px] border border-white bg-[#0000ff] pr-px text-right font-['Liberation_Sans',sans-serif] text-[12px] leading-[14px] text-white">4192.50</div>
          <PriceTag y="top-[273px]" tone="bg-[#ff8c00]">4193.50</PriceTag>
          <PriceTag y="top-[307px]" tone="bg-[#4169e1]">4192.25</PriceTag>
          <PriceTag y="top-[341px]" tone="bg-[#ff0000]">4190.50</PriceTag>
        </div>
      </div>
      <div className="h-[21px] shrink-0 border-b border-[#b0c4de]" />
      <div className="-ml-[25px] flex h-[19px] shrink-0 items-center font-['Liberation_Sans',sans-serif] text-[12px]">
        {["07:51", "08:22", "09:08", "09:26", "10:05", "10:12"].map((t) => (
          <span key={t} className="w-[90px] shrink-0 pl-4">{t}</span>
        ))}
        <div className="ml-5 h-[15px] w-9 border border-[#b0c4de]" />
      </div>
    </div>
  );
}

function MinuteChart() {
  return (
    <div className={`mr-0.5 mb-0.5 flex min-h-0 flex-1 flex-col overflow-hidden border-t-2 border-l border-[#888] bg-black text-[#b0c4de] ${tahoma}`}>
      <div className="flex min-h-0 flex-1">
        <div className="relative flex min-w-0 flex-1 flex-col border-r border-[#b0c4de]">
          <svg className="absolute inset-0 h-full w-full">
            <g transform="translate(-781,-98)">
              {profile.map((end, i) => {
                const y = Math.round(121 + i * 4.016);
                const stroke = i === 28 ? "#9acd32" : "#606060";
                return <rect key={i} x="779.500" y={y + 0.5} width={end - 780} height="2" fill={i === 28 ? "#507800" : "#101010"} stroke={stroke} />;
              })}
              <rect x="820.500" y="286.500" width="385" height="2" fill="#604830" stroke="#d2a878" />
              <path d="M781 343.500h510" stroke="#8890a0" />
              {bubbles.map(([x, y, r, f, s]) => (
                <circle key={x} cx={x + 0.5} cy={y + 0.5} r={r} fill={f} stroke={s} />
              ))}
              <path d="M1113 331.500h52M1112 351.500h54M1118 371.500h40" stroke="#ffb0b0" strokeOpacity="0.600" />
              {candles.map(([x, wt, wb, bt, bb, d]) => (
                <g key={x}>
                  <path d={`M${x + 0.5} ${wt}V${wb}`} stroke="#a0a0a0" />
                  {d === "x" ? (
                    <path d={`M${x - 2} ${bt + 0.5}h5`} stroke="#a0a0a0" />
                  ) : (
                    <rect x={x - 1.5} y={bt + 0.5} width="4" height={bb - bt} fill={d === "u" ? "#40d040" : "#e01414"} stroke="#a0a0a0" />
                  )}
                </g>
              ))}
              <path d="M1234.500 98V560" stroke="#fff" strokeDasharray="3 2" />
              <path d="M1197 98h11l-5.500 5z" fill={STEEL} />
              <path d="M781 455.500H1290" stroke={STEEL} strokeWidth="1" />
              {volumes.map(([x, h, k]) => (
                <rect key={x} x={x - 2} y={523 - h} width="5" height={h} fill={k === "r" ? "#a00000" : "#00b0b0"} />
              ))}
              <g fontSize="11" fontWeight="bold" fill={STEEL} textAnchor="end">
                <text x="1260" y="361">15:33:00</text>
                <text x="1260" y="374">02:58</text>
              </g>
              <text x="786" y="473" fontSize="12" fill={STEEL}>Volume</text>
            </g>
          </svg>
          <div className="relative flex items-center gap-[3px] pt-[3px] pl-[3px] text-[13px]">
            <span className="w-[65px] whitespace-pre">Минута  3</span>
            {drawTools.map((n) => <Glyph key={n} name={n} on={n === "plus" || n === "slash" || n === "dot"} />)}
            <Collapse />
            <div className="ml-5 flex gap-[3px]">{viewTools.map((n) => <Glyph key={n} name={n} on={n === "arrow" || n === "ibeam"} />)}</div>
          </div>
          <div className="absolute top-[336px] left-0.5"><Wrench /></div>
        </div>
        <div className="relative w-[75px] shrink-0">
          <svg className="absolute inset-0 h-full w-full">
            <g transform="translate(-1284,-98)">
              {Array.from({ length: 88 }, (_, i) => (
                <path key={i} d={`M1284 ${Math.round(102 + i * 4.024) + 0.5}h5`} stroke="#555" />
              ))}
              {Array.from({ length: 22 }, (_, i) => {
                const y = Math.round(106 + i * 16.1);
                return (
                  <g key={i}>
                    <path d={`M1284 ${y + 0.5}h12`} stroke={STEEL} />
                    {i !== 15 && (
                      <text x="1357" y={y + 5} textAnchor="end" fontSize="12" fill={STEEL} fontFamily="Liberation Sans">{(4207 - i).toFixed(2)}</text>
                    )}
                  </g>
                );
              })}
              <path d="M1288 343.500l12-8.500h60v17h-60z" fill="#808080" />
              <text x="1358" y="348" textAnchor="end" fontSize="13" fontWeight="bold" fill="#000">4192.25</text>
              <path d="M1284 455.500h80" stroke={STEEL} />
              <path d="M1284 516.500h12" stroke="#fff" />
              <rect x="1298.500" y="508.500" width="51" height="16" fill="#808080" stroke="#e8e8e8" />
              <text x="1347" y="521" textAnchor="end" fontSize="12" fill="#e0e0e0">175</text>
            </g>
          </svg>
        </div>
      </div>
      <div className="flex h-[22px] shrink-0 items-center justify-end border-y border-[#b0c4de] pr-16">
        <span className="border border-white bg-[#808080] px-0.5 text-[12px] leading-[14px] text-[#e8e8e8]">2021.06.03 10:45:01</span>
      </div>
      <div className="flex h-[19px] shrink-0 items-center justify-end pr-2 font-['Liberation_Sans',sans-serif] text-[12px]">
        <span className="mr-[60px]">09:15</span>
        <span className="mr-10">09:54</span>
        <div className="mr-[32px] h-4 w-[38px] border border-[#b0c4de]" />
        <span className={`text-[12px] ${tahoma}`}>2021.06.03 10:33:00</span>
      </div>
    </div>
  );
}

/* ---------- terminal ---------- */

function Sheet({ color }: { color: string }) {
  return (
    <svg width="13" height="15" viewBox="0 0 13 15"><path d="M1 1h11v9l-4 4H1z" fill="#fff" stroke={color} strokeWidth="1.500" /><path d="M3 4h6M3 6h6M3 8h6" stroke={color} /><path d="M12 10H8v4z" fill={color} /></svg>
  );
}

function RowClose() {
  return <button aria-label="Закрыть позицию" className="ml-2 inline-block w-3 align-middle"><svg width="8" height="8" viewBox="0 0 8 8"><path d="M1 1l6 6M7 1L1 7" stroke="#888" strokeWidth="2" /></svg></button>;
}

function Terminal() {
  const th = "h-[23px] border-b border-[#b0b0b0] border-r border-r-[#dcdcdc] px-2 font-normal";
  const td = "h-5 border-r border-b border-[#c8c8c8] px-[3px]";
  const order = (color: string, ticket: string, type: string, state: string) => (
    <tr className="bg-white">
      <td className={td}><div className="flex items-center gap-[6px] leading-4"><Sheet color={color} />mesm21</div></td>
      <td className={td}>{ticket}</td>
      <td className={`${td} text-right`}>2021.06.03 10:33:00</td>
      <td className={`${td} text-right`}>{type}</td>
      <td className={td} />
      <td className={`${td} text-right`}>4192.25</td>
      <td className="border-b border-[#c8c8c8] pr-0.5 text-right leading-4">{state}<RowClose /></td>
    </tr>
  );
  return (
    <section className="flex shrink-0 bg-[#f0f0f0] pt-px">
      <div className="flex w-2.5 shrink-0 flex-col overflow-hidden">
        <button aria-label="Закрыть панель" className="h-3.5"><svg width="6" height="6" viewBox="0 0 6 6"><path d="M0 1l5 4M5 1L0 5" stroke="#000" strokeWidth="1.500" /></svg></button>
        <div className="flex flex-1 items-end bg-[#d4dfec]">
          <span className="-ml-1 rotate-180 text-[10px] leading-[14px] text-[#8090a0] [writing-mode:vertical-rl]">Инструменты</span>
        </div>
      </div>
      <div className="min-w-0 flex-1">
        <div className="mr-[3px] border-t-2 border-l border-[#a8a8a8] bg-white pb-1.5">
          <table className="w-full table-fixed border-separate border-spacing-0 text-[11px]">
            <colgroup>
              <col className="w-[162px]" /><col className="w-[112px]" /><col className="w-[141px]" /><col className="w-[128px]" /><col /><col className="w-[124px]" /><col className="w-[188px]" />
            </colgroup>
            <thead className="bg-linear-to-b from-white to-[#f1f2f4]">
              <tr>
                <th className={`${th} pl-1.5 text-left`}>Символ</th>
                <th className={`${th} pl-1.5 text-left`}>Тикет</th>
                <th className={`${th} text-right`}>Время <svg width="8" height="5" viewBox="0 0 8 5" className="ml-2 inline"><path d="M0 0h8L4 5z" fill="#333" /></svg></th>
                <th className={`${th} text-right`}>Тип</th>
                <th className={`${th} pr-[5px] text-right`}>T / P</th>
                <th className={`${th} pr-[5px] text-right`}>Цена</th>
                <th className={`${th} pr-1.5 text-right`}>Прибыль</th>
              </tr>
            </thead>
            <tbody>
              {order("#3080c0", "16777511", "buy", "0.00")}
              <tr className="bg-[#c6c6c6] font-bold">
                <td colSpan={6} className="h-5 pl-1.5 whitespace-pre">
                  <span className="mr-2 inline-block h-[7px] w-[7px] rounded-full bg-[#808080]" />
                  {"Баланс: 171.55 USD  Средства: 171.55  Маржа: 40.00  Свободная маржа: 131.55  Уровень маржи"}
                </td>
                <td className="pr-px text-right leading-4">
                  0.00
                  <button aria-label="Добавить" className="ml-1 inline-block align-middle">
                    <svg width="16" height="16" viewBox="0 0 16 16"><circle cx="8" cy="8" r="8" fill="#f0f0f0" /><path d="M8 3v10M3 8h10" stroke="#40b020" strokeWidth="2.500" /></svg>
                  </button>
                </td>
              </tr>
              {order("#e05020", "16777512", "sell limit", "placed")}
            </tbody>
          </table>
        </div>
        <div className="flex h-[22px] items-start border-t border-black text-[11px] text-[#808080]">
          <a href="#" className="-mt-px ml-0.5 h-[19px] w-[70px] border border-t-0 border-black bg-white text-center leading-[17px] text-black">Торговля</a>
          {["Активы", "История", "Новости", "Почта", "Календарь", "Компания", "Алерты"].map((t, i) => (
            <a key={t} href="#" className={i === 0 ? "mt-[3px] px-2.5 leading-3" : "mt-[3px] border-l border-[#808080] px-2.5 leading-3"}>
              {t}
              {t === "Почта" && <sub className="text-[8px] leading-3 font-bold text-red-600">7</sub>}
            </a>
          ))}
          <div className="mr-[13px] ml-auto flex items-center gap-3.5 pt-[3px] leading-4 text-black">
            <a href="#" className="flex items-center gap-1"><Bag size={14} />Маркет</a>
            <a href="#" className="flex items-center gap-0.5"><Signal size={14} />Сигналы</a>
            <a href="#" className="flex items-center gap-0.5"><Cloud size={15} />VPS</a>
            <a href="#" className="flex items-center gap-0.5">
              <svg width="16" height="14" viewBox="0 0 16 14"><path d="M0 0h16v14H0z" fill="#2878c0" /><path d="M1 3h14v10H1z" fill="#103818" /><path d="M1 9l4-3 4 2 6-3" stroke="#60e040" strokeWidth="1.500" fill="none" /></svg>
              Тестер стратегий
            </a>
          </div>
        </div>
      </div>
    </section>
  );
}

function StatusBar() {
  return (
    <footer className="flex h-6 shrink-0 items-center border-t border-[#a0a0a0] bg-[#f0f0f0] pt-0.5 text-[11px]">
      <span>Для вызова справки нажмите F1</span>
      <div className="ml-auto flex h-[18px] w-[321px] items-center">
        <span className="h-full w-[67px] border-l border-[#a0a0a0]" />
        <span className="h-full w-[69px] border-l border-[#a0a0a0]" />
        <span className="h-full w-[66px] border-l border-[#a0a0a0]" />
        <span className="flex h-full flex-1 items-center gap-1 border-l border-[#a0a0a0] pl-1.5">
          <svg width="16" height="16" viewBox="0 0 16 16"><path d="M1 2l3-1h8v12H3l-2-1z" fill="#3098e8" /><path d="M5 4h5M5 6h5" stroke="#c0e4ff" /><circle cx="12" cy="12" r="4" fill="#40a020" stroke="#fff" /><path d="M10 12l1.500 1.500 2.500-3" stroke="#fff" fill="none" /></svg>
          12.0 / 0.0 Mb
        </span>
      </div>
    </footer>
  );
}

/* ---------- trading dialog ---------- */

function Check({ id, label, on, bold }: { id: string; label: string; on?: boolean; bold?: boolean }) {
  return (
    <span className="flex shrink-0 items-center gap-1 whitespace-nowrap">
      <span className="grid h-[13px] w-[13px] place-items-center">
        <input id={id} type="checkbox" defaultChecked={on} className="peer col-start-1 row-start-1 h-[13px] w-[13px] appearance-none border border-[#8e8f8f] bg-linear-to-br from-[#d0d4d8] to-white" />
        {on && <svg width="9" height="9" viewBox="0 0 9 9" className="pointer-events-none col-start-1 row-start-1"><path d="M1 4l2.500 4L8 1" fill="none" stroke="#4b5f97" strokeWidth="1.800" /></svg>}
      </span>
      <label htmlFor={id} className={bold ? "text-[14px] leading-4 font-bold text-[#006400]" : "leading-4"}>{label}</label>
    </span>
  );
}

function Radio({ id, name, label, on }: { id: string; name: string; label: string; on?: boolean }) {
  return (
    <span className="flex w-[73px] shrink-0 items-center gap-[5px]">
      <input id={id} name={name} type="radio" defaultChecked={on} className="h-3 w-3 appearance-none rounded-full border border-[#8e8f8f] bg-[#f4f4f4] bg-radial checked:from-[#1070a0] checked:from-45% checked:to-white checked:to-60%" />
      <label htmlFor={id} className="leading-4">{label}</label>
    </span>
  );
}

function Spin({ label, value, w }: { label: string; value: string; w: string }) {
  return (
    <span className={`flex h-[21px] shrink-0 border border-[#abadb3] bg-white p-px ${w}`}>
      <input aria-label={label} defaultValue={value} className="min-w-0 flex-1 bg-white pl-px text-[12px] leading-4" />
      <span className="flex w-3.5 flex-col gap-px">
        <button aria-label="Больше" className="flex flex-1 items-center justify-center rounded-sm border border-[#d0d0d4] bg-[#f4f4f4]"><svg width="5" height="3" viewBox="0 0 5 3"><path d="M0 3h5L2.500 0z" fill="#4b5f97" /></svg></button>
        <button aria-label="Меньше" className="flex flex-1 items-center justify-center rounded-sm border border-[#d0d0d4] bg-[#f4f4f4]"><svg width="5" height="3" viewBox="0 0 5 3"><path d="M0 0h5L2.500 3z" fill="#4b5f97" /></svg></button>
      </span>
    </span>
  );
}

function SignalGroup({ title, id }: { title: string; id: string }) {
  return (
    <fieldset className="h-40 rounded-sm border border-[#d5dfe5] px-[6px]">
      <legend className="ml-0.5 px-0.5 text-[12px] leading-3">{title}</legend>
      <div className="flex h-6 items-center pt-0.5"><Radio id={`${id}-buy`} name={`${id}-side`} label="покупка" on /><Check id={`${id}-on`} label="ВКЛЮЧИТЬ" bold /></div>
      <div className="flex h-6 items-center gap-0.5"><Radio id={`${id}-sell`} name={`${id}-side`} label="продажа" /><Spin label="таймер" value="10" w="w-[57px]" /><span>таймер, сек</span></div>
      <div className="flex h-6 items-center gap-4"><Check id={`${id}-line`} label="использовать линию" on /><Check id={`${id}-limit`} label="лимит" on /></div>
      <div className="flex h-6 items-center gap-1.5"><Spin label="допуск" value="1" w="w-[42px]" /><span>допуск по сигналу в тиках</span></div>
    </fieldset>
  );
}

function TradeDialog() {
  const coral = "border border-[#7a2c10] bg-[#ff7f50]";
  const blue = "border border-[#0a3a70] bg-[#1e90ff]";
  const gray = "border border-[#404040] bg-[#d3d3d3]";
  return (
    <div
      role="dialog"
      aria-label="MESM21, Тик 1000"
      className={`absolute top-[480px] left-[541px] h-[288px] w-[463px] overflow-hidden border border-b-0 border-[#101828] bg-linear-to-b from-[#0c2c64] via-[#2c60a8] to-[#10305c] px-[5px] text-black shadow-[0_0_12px_4px_rgba(140,140,140,0.55)] ${tahoma}`}
    >
      <div className="absolute inset-x-0 top-0 h-[30px] bg-linear-to-b from-[#123670] from-30% via-[#3c68a8] via-60% to-[#d8e4f4]" />
      <div className="absolute top-1.5 left-0 h-5 w-28 rounded-full bg-[#c8d8ee]/70 blur-[5px]" />
      <div className="relative flex h-[29px] justify-between">
        <h2 className="pt-1.5 text-[12px] leading-4 whitespace-pre">MESM21, Тик  1000</h2>
        <button aria-label="Закрыть" className="flex h-[17px] w-[48px] items-center justify-center rounded-b border border-t-0 border-[#c4d0e0] bg-linear-to-b from-[#5878a4] to-[#122c5c]">
          <svg width="10" height="9" viewBox="0 0 10 9"><path d="M1 1l8 7M9 1L1 8" stroke="#fff" strokeWidth="2.500" /></svg>
        </button>
      </div>
      <div className="relative flex h-80 gap-[7px] bg-[#f0f0f0] pt-[5px] pr-1.5 pl-[5px] text-[11px] leading-4">
        <div className="w-[222px] shrink-0">
          <div className="flex justify-between">
            <div className="flex w-[84px] flex-col gap-[15px]">
              <button className={`h-[35px] leading-[13px] ${coral}`}>Best Sell Limit<br />4192.50</button>
              <button className={`h-[35px] leading-[13px] ${blue}`}>Best Buy Limit<br />4192.25</button>
            </div>
            <div className="flex w-[50px] flex-col gap-[10px] text-[12px]">
              <button className={`h-5 ${coral}`}>SELL</button>
              <button className="h-6 border border-[#600000] bg-[#ff0000] font-bold">CLOSE</button>
              <button className={`h-5 ${blue}`}>BUY</button>
            </div>
            <div className="flex w-[65px] flex-col gap-[10px] text-[12px]">
              <button className={`h-5 ${coral}`}>Delete</button>
              <button className={`h-6 whitespace-nowrap ${gray}`}>Delete all</button>
              <button className={`h-5 ${blue}`}>Delete</button>
            </div>
          </div>
          <div className="mt-[9px] flex items-center justify-between">
            <span className="w-[76px]">объем ордера</span>
            <Spin label="объем ордера" value="1" w="w-[57px]" />
            <button className={`h-5 w-[65px] text-[11px] ${gray}`}>Reverse</button>
          </div>
          <div className="mt-2 mb-1.5 flex items-center justify-between">
            <Check id="sl" label="SL" on />
            <Spin label="SL" value="7" w="w-[65px] ml-2" />
            <Check id="tp" label="TP" on />
            <Spin label="TP" value="5" w="w-[65px] ml-2" />
          </div>
          <SignalGroup title="Дельта/Объем" id="delta" />
        </div>
        <div className="min-w-0 flex-1">
          <fieldset className="h-[122px] rounded-sm border border-[#d5dfe5] pr-1 pl-1">
            <legend className="ml-0.5 px-0.5 text-[12px] leading-3">Лимитный ордер</legend>
            <div className="flex h-5 items-center pt-0.5"><Check id="cancel" label="отменяется, если цена ушла на" on /></div>
            <div className="flex h-[22px] items-center gap-2"><Spin label="тики отмены" value="5" w="w-[57px]" />тиков</div>
            <div className="flex h-[22px] items-center justify-between pr-1.5"><Check id="move" label="передвигается на" /><Spin label="тики сдвига" value="0" w="w-[42px]" />тиков</div>
            <div className="flex h-[22px] items-center gap-1.5"><span className="w-[97px]">если цена прошла</span><Spin label="пройдено" value="0" w="w-[47px]" />тиков и</div>
            <div className="flex h-[22px] items-center gap-1.5"><span className="w-[97px]">прошло не более</span><Spin label="секунды" value="0" w="w-[58px]" />сек.</div>
          </fieldset>
          <div className="mt-1.5 mb-1.5 pl-2"><Check id="take" label="тейкпрофит лимитным ордером" on /></div>
          <SignalGroup title="Имбаланс" id="imbalance" />
        </div>
      </div>
    </div>
  );
}

/* ---------- taskbar ---------- */

function Task({ label, active, children }: { label: string; active?: boolean; children: ReactNode }) {
  return (
    <button aria-label={label} className={active ? "mx-px flex h-full w-[58px] items-center justify-center border border-[#7890b4] bg-white/20" : "flex h-full w-[62px] items-center justify-center"}>
      {children}
    </button>
  );
}

function Office({ letter, color }: { letter: string; color: string }) {
  return (
    <svg width="30" height="30" viewBox="0 0 30 30">
      <path d="M4 1h25v28H1V6z" fill="#f4f8f4" stroke={color} />
      <path d="M17 15h10M17 19h10M17 23h10M12 26h15" stroke={color} strokeWidth="1.500" />
      <path d="M1 5l21-3v20L1 20z" fill={color} fillOpacity="0.250" />
      <text x="11" y="20" textAnchor="middle" fontSize="20" fontWeight="bold" fill={color} fontFamily="Liberation Sans">{letter}</text>
    </svg>
  );
}

function Taskbar() {
  return (
    <div className="flex h-10 shrink-0 items-center border-t border-[#101c30] bg-linear-to-b from-[#3d5a84] from-0% via-[#1c3c6c] via-50% to-[#00205a] to-51% text-white">
      <button aria-label="Пуск" className="ml-[3px] mr-[10px]">
        <svg width="38" height="38" viewBox="0 0 38 38">
          <defs><radialGradient id="orb" cx="0.5" cy="0.9"><stop offset="0" stopColor="#50e8ff" /><stop offset="0.5" stopColor="#1868a8" /><stop offset="1" stopColor="#183c68" /></radialGradient></defs>
          <circle cx="19" cy="19" r="18" fill="url(#orb)" stroke="#7098b8" />
          <ellipse cx="19" cy="10" rx="14" ry="8" fill="#fff" opacity="0.250" />
          <path d="M11 11c3-2 6-1 8 0l-2 8c-3-1-5-2-8 0z" fill="#f05828" />
          <path d="M20 11c3 1 5 2 9 0l-2 8c-3 2-6 1-9 0z" fill="#80c030" />
          <path d="M9 20c3-2 6-1 8 0l-2 8c-3-1-6-2-8 0z" fill="#30a0e8" />
          <path d="M18 20c3 1 5 2 9 0l-2 8c-3 2-6 1-9 0z" fill="#fcc020" />
        </svg>
      </button>
      <Task label="Excel"><Office letter="X" color="#1c8038" /></Task>
      <Task label="Word"><Office letter="W" color="#1850a8" /></Task>
      <Task label="Калькулятор">
        <svg width="32" height="32" viewBox="0 0 32 32"><path d="M2 1l22 1 6 26-20 3z" fill="#d8d8d8" stroke="#555" /><path d="M4 3l19 1 1 6-18 1z" fill="#444" /><path d="M9 5h12v4H9z" fill="#a8b8a8" /><path d="M8 13.500h15M9 17.500h16M10 21.500h16M11 25.500h16" stroke="#666" strokeWidth="2" strokeDasharray="2 1" /><path d="M9 17.500h2M10 21.500h2" stroke="#c03030" strokeWidth="2" /></svg>
      </Task>
      <Task label="Проводник">
        <svg width="34" height="32" viewBox="0 0 34 32"><path d="M2 4l10-2h18l2 4v22H2z" fill="#f0c860" /><path d="M5 4h8v4H5z" fill="#30a030" /><path d="M14 4h7v4h-7z" fill="#e04030" /><path d="M22 5h8v4h-8z" fill="#3080d0" /><path d="M1 9h32v20H1z" fill="#fce49c" stroke="#d8a840" /><path d="M6 31V20h22v11h-6v-6H12v6z" fill="#78c0e8" stroke="#c8ecff" /></svg>
      </Task>
      <Task label="Opera">
        <svg width="32" height="32" viewBox="0 0 32 32"><ellipse cx="16" cy="16" rx="14.500" ry="15" fill="#f01c30" /><path d="M16 1a14.500 15 0 0 1 0 30z" fill="#c81020" /><ellipse cx="16" cy="16" rx="7" ry="11.500" fill="#123062" /></svg>
      </Task>
      <Task label="MetaTrader 5" active><Trident size={29} /></Task>
      <div className="ml-auto flex h-full items-center gap-2 text-[11px]">
        <span className="mr-2.5 pb-1 text-[12px]">RU</span>
        <svg width="14" height="16" viewBox="0 0 14 16"><path d="M7 1l6 2v7l-6 5-6-5V3z" fill="#109880" /><path d="M4 8l2 2 4-4" stroke="#fff" strokeWidth="1.500" fill="none" /></svg>
        <svg width="17" height="17" viewBox="0 0 17 17"><path d="M3 0h6v4h1v6l-3 3H5l-3-3V4h1z" fill="#999" /><circle cx="12" cy="11" r="4.500" fill="#30a030" stroke="#e0ffe0" /><path d="M10 11l2 2 3-4" stroke="#fff" fill="none" /></svg>
        <svg width="17" height="17" viewBox="0 0 17 17"><circle cx="8" cy="8" r="7.500" fill="#40b840" /><path d="M3 9a5 5 0 0 1 9-4" stroke="#fff" strokeWidth="2" fill="none" /><circle cx="10" cy="10" r="5.500" fill="#7848b8" stroke="#fff" /><text x="10" y="13" textAnchor="middle" fontSize="9" fill="#fff" fontFamily="Liberation Sans">4</text></svg>
        <svg width="16" height="17" viewBox="0 0 16 17"><path d="M1 0v16" stroke="#fff" strokeWidth="2" /><path d="M2 1c4-1 5 2 10 0v7c-5 2-6-1-10 0z" fill="#fff" /><circle cx="11" cy="11" r="5" fill="#e02818" /><path d="M9 9l4 4M13 9l-4 4" stroke="#fff" strokeWidth="1.500" /></svg>
        <svg width="15" height="14" viewBox="0 0 15 14"><path d="M0 11h2v3H0zM3 9h2v5H3zM6 7h2v7H6z" fill="#fff" /><path d="M9 4h2v10H9zM12 1h2v13h-2z" fill="#8090a8" /></svg>
        <svg width="16" height="14" viewBox="0 0 16 14"><path d="M0 4h3l4-4v14l-4-4H0z" fill="#fff" /><path d="M9 4c1 2 1 4 0 6M11 2c3 3 3 7 0 10M13.500 1c3 4 3 8 0 12" stroke="#fff" fill="none" /></svg>
        <svg width="15" height="16" viewBox="0 0 15 16"><path d="M6 3H1v12h8v-2" stroke="#fff" strokeWidth="1.500" fill="none" /><path d="M6 5h8v3l-2 3H8L6 8zM8 1v4M12 1v4M10 11v4" stroke="#fff" strokeWidth="1.300" fill="#fff" /></svg>
        <div className="ml-1.5 w-16 text-center text-[11px] leading-[17px]"><div>15:32</div><div>03.06.2021</div></div>
        <button aria-label="Показать рабочий стол" className="h-full w-3.5 border border-[#607ca4] bg-white/5" />
      </div>
    </div>
  );
}

export default function App() {
  return (
    <div className="relative flex h-screen flex-col overflow-hidden bg-white pr-[5px] font-['Open_Sans','Noto_Sans',sans-serif] text-black">
      <TitleBar />
      <MenuBar />
      <Toolbar />
      <main className="flex min-h-0 flex-1 bg-[#f0f0f0]">
        <MdiFrame title="MESM21,M1" className="flex min-w-0 flex-[772] flex-col border-r border-[#888]"><ClusterChart /></MdiFrame>
        <MdiFrame title="EPM21,M1" className="flex min-w-0 flex-[581] flex-col pl-[7px]"><MinuteChart /></MdiFrame>
      </main>
      <div className="flex h-[21px] shrink-0 items-start border-t border-black bg-[#f0f0f0] text-[11px]">
        <a href="#" className="w-[84px] pl-2 leading-5 text-[#808080]">MESM21,M1</a>
        <a href="#" className="-mt-px h-[18px] w-[77px] border border-t-0 border-black bg-white text-center leading-4 text-black">EPM21,M1</a>
        <div className="mr-[13px] ml-auto flex gap-3.5 pt-1">
          <button aria-label="Назад"><svg width="5" height="7" viewBox="0 0 5 7"><path d="M4 0v7L0 3.500z" fill="#888" /></svg></button>
          <button aria-label="Вперёд"><svg width="5" height="7" viewBox="0 0 5 7"><path d="M0 0v7l4-3.500z" fill="#888" /></svg></button>
        </div>
      </div>
      <Terminal />
      <StatusBar />
      <Taskbar />
      <TradeDialog />
    </div>
  );
}
